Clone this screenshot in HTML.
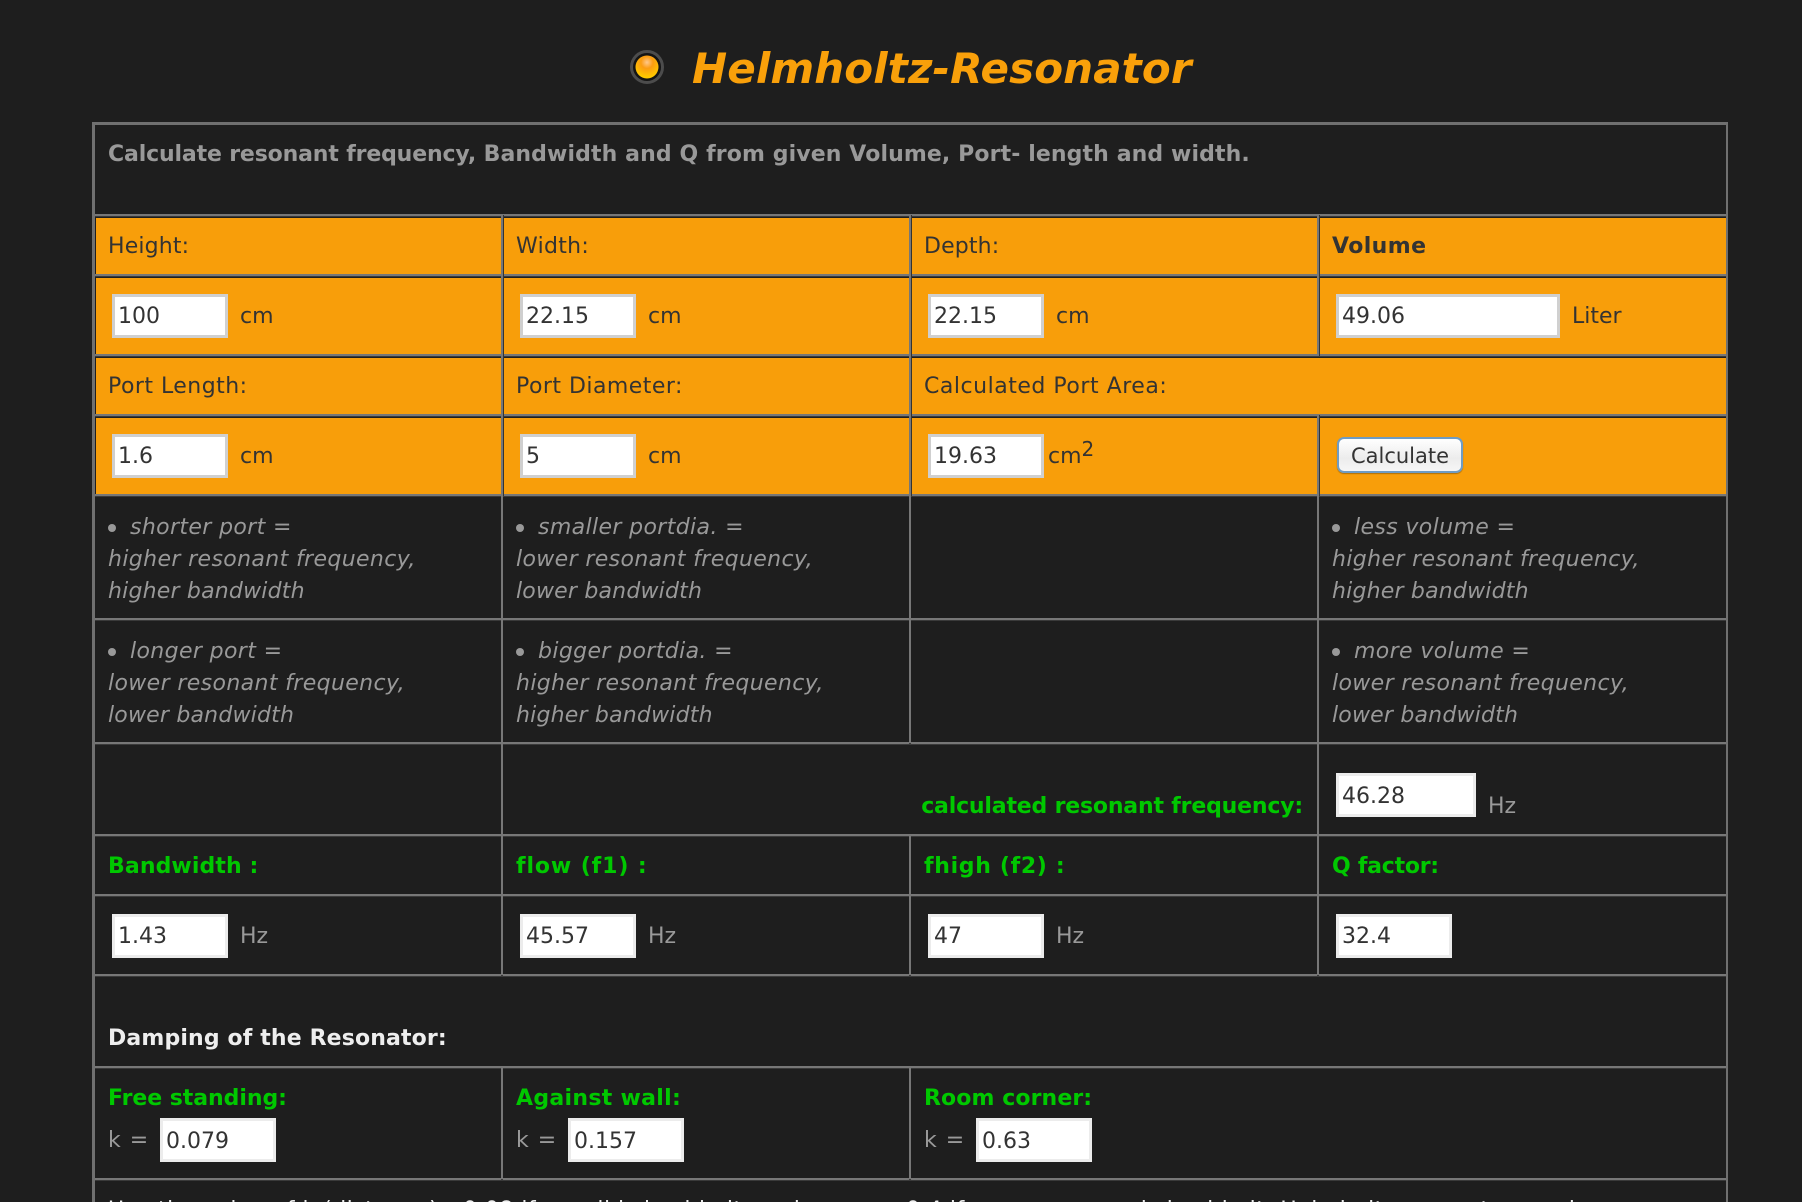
<!DOCTYPE html>
<html><head><meta charset="utf-8"><title>Helmholtz-Resonator</title>
<style>
html,body{margin:0;padding:0;background:#1e1e1e;width:1802px;height:1202px;overflow:hidden}
body{position:relative;font-family:"DejaVu Sans","Liberation Sans",sans-serif;font-size:22px;color:#999}
.l,.o,.t,.i,.v{position:absolute}
.l{background:#777;box-shadow:0 1px 0 #3a3a3a}
.f{background:#707070;box-shadow:none}
.y{box-shadow:1px 0 0 #333}
.o{background:#f89e0a}
.t{white-space:nowrap;line-height:28px;height:28px;margin-top:1px;letter-spacing:.47px}
.n{letter-spacing:0}
.d{color:#333}.b{font-weight:bold;letter-spacing:.11px}.g{color:#00c800;font-weight:bold;letter-spacing:0}.w{color:#eee;font-weight:bold;letter-spacing:.14px}
.e{font-style:italic;letter-spacing:.37px;margin-top:2px}
.i{background:#fff;box-sizing:border-box;border:3px solid #ececec;color:#333;height:44px;line-height:40px;padding-left:3px}
.j{line-height:42px}
.s{border-color:#cfcfcf #d0d0d0 #d0d0d0 #cfcfcf}
.u{position:absolute;width:8px;height:8px;border-radius:50%;background:#999}
.btn{position:absolute;left:1337px;top:437px;width:126px;height:36px;box-sizing:border-box;border:2px solid #6f9cc4;border-radius:7px;background:linear-gradient(#fff,#ececec 60%,#f6f6f6);color:#333;text-align:center;line-height:34px;font-size:21px;box-shadow:0 1px 1px rgba(0,0,0,.3)}
</style></head><body>
<svg style="position:absolute;left:628px;top:48px" width="38" height="38" viewBox="0 0 38 38">
<defs><radialGradient id="a" cx=".5" cy=".3" r=".75"><stop offset="0" stop-color="#ffc88a"/><stop offset=".35" stop-color="#fb9c12"/><stop offset=".8" stop-color="#ffc400"/><stop offset="1" stop-color="#ffd000"/></radialGradient></defs>
<circle cx="19" cy="19" r="15.5" fill="#141414" stroke="#4c4c4c" stroke-width="3"/><circle cx="19" cy="19" r="11.5" fill="url(#a)"/></svg>
<div class="t" style="left:692px;top:40px;height:56px;line-height:56px;font-size:42px;font-weight:bold;font-style:italic;color:#f9a00a;letter-spacing:.12px">Helmholtz-Resonator</div>

<div class="o" style="left:96px;top:218px;width:1630px;height:56px"></div>
<div class="o" style="left:96px;top:278px;width:1630px;height:76px"></div>
<div class="o" style="left:96px;top:358px;width:1630px;height:56px"></div>
<div class="o" style="left:96px;top:418px;width:1630px;height:76px"></div>

<!-- frame -->
<div class="l f" style="left:92px;top:122px;width:1636px;height:3px"></div>
<div class="l f" style="left:92px;top:122px;width:3px;height:1080px"></div>
<div class="l f" style="left:1726px;top:122px;width:2px;height:1080px"></div>
<!-- rows -->
<div class="l" style="left:95px;top:214px;width:1631px;height:2px"></div>
<div class="l" style="left:95px;top:274px;width:1631px;height:2px"></div>
<div class="l" style="left:95px;top:354px;width:1631px;height:2px"></div>
<div class="l" style="left:95px;top:414px;width:1631px;height:2px"></div>
<div class="l" style="left:95px;top:494px;width:1631px;height:2px"></div>
<div class="l" style="left:95px;top:618px;width:1631px;height:2px"></div>
<div class="l" style="left:95px;top:742px;width:1631px;height:2px"></div>
<div class="l" style="left:95px;top:834px;width:1631px;height:2px"></div>
<div class="l" style="left:95px;top:894px;width:1631px;height:2px"></div>
<div class="l" style="left:95px;top:974px;width:1631px;height:2px"></div>
<div class="l" style="left:95px;top:1066px;width:1631px;height:2px"></div>
<div class="l" style="left:95px;top:1178px;width:1631px;height:2px"></div>
<!-- verticals -->
<div class="l y" style="left:501px;top:215px;width:2px;height:61px"></div>
<div class="l y" style="left:909px;top:215px;width:2px;height:61px"></div>
<div class="l y" style="left:1317px;top:215px;width:2px;height:61px"></div>
<div class="l y" style="left:501px;top:275px;width:2px;height:81px"></div>
<div class="l y" style="left:909px;top:275px;width:2px;height:81px"></div>
<div class="l y" style="left:1317px;top:275px;width:2px;height:81px"></div>
<div class="l y" style="left:501px;top:355px;width:2px;height:61px"></div>
<div class="l y" style="left:909px;top:355px;width:2px;height:61px"></div>
<div class="l y" style="left:501px;top:415px;width:2px;height:81px"></div>
<div class="l y" style="left:909px;top:415px;width:2px;height:81px"></div>
<div class="l y" style="left:1317px;top:415px;width:2px;height:81px"></div>
<div class="l" style="left:501px;top:495px;width:2px;height:248px"></div>
<div class="l" style="left:909px;top:495px;width:2px;height:248px"></div>
<div class="l" style="left:1317px;top:495px;width:2px;height:248px"></div>
<div class="l" style="left:501px;top:743px;width:2px;height:92px"></div>
<div class="l" style="left:1317px;top:743px;width:2px;height:92px"></div>
<div class="l" style="left:501px;top:835px;width:2px;height:140px"></div>
<div class="l" style="left:909px;top:835px;width:2px;height:140px"></div>
<div class="l" style="left:1317px;top:835px;width:2px;height:140px"></div>
<div class="l" style="left:501px;top:1067px;width:2px;height:112px"></div>
<div class="l" style="left:909px;top:1067px;width:2px;height:112px"></div>

<div class="t b" style="left:108px;top:140px"><span style="letter-spacing:-.15px">Calculate resonant frequency, </span>Bandwidth and Q from given Volume, Port- length and width.</div>

<div class="t d" style="left:108px;top:232px;letter-spacing:.15px">Height:</div>
<div class="t d" style="left:516px;top:232px;letter-spacing:.3px">Width:</div>
<div class="t d" style="left:924px;top:232px;letter-spacing:.15px">Depth:</div>
<div class="t d b" style="left:1332px;top:232px;letter-spacing:.4px">Volume</div>

<div class="i s" style="left:112px;top:294px;width:116px">100</div><div class="t d n" style="left:240px;top:302px">cm</div>
<div class="i s" style="left:520px;top:294px;width:116px">22.15</div><div class="t d n" style="left:648px;top:302px">cm</div>
<div class="i s" style="left:928px;top:294px;width:116px">22.15</div><div class="t d n" style="left:1056px;top:302px">cm</div>
<div class="i s" style="left:1336px;top:294px;width:224px">49.06</div><div class="t d n" style="left:1572px;top:302px">Liter</div>

<div class="t d" style="left:108px;top:372px">Port Length:</div>
<div class="t d" style="left:516px;top:372px">Port Diameter:</div>
<div class="t d" style="left:924px;top:372px;letter-spacing:.52px">Calculated Port Area:</div>

<div class="i s" style="left:112px;top:434px;width:116px">1.6</div><div class="t d n" style="left:240px;top:442px">cm</div>
<div class="i s" style="left:520px;top:434px;width:116px">5</div><div class="t d n" style="left:648px;top:442px">cm</div>
<div class="i s" style="left:928px;top:434px;width:116px">19.63</div><div class="t d n" style="left:1048px;top:442px">cm<sup style="font-size:20px;line-height:0;position:relative;top:1px">2</sup></div>
<div class="btn">Calculate</div>

<div class="u" style="left:108px;top:524px"></div><div class="t e" style="left:130px;top:512px">shorter port =</div>
<div class="t e" style="left:108px;top:544px">higher resonant frequency,</div><div class="t e" style="left:108px;top:576px;letter-spacing:.2px">higher bandwidth</div>
<div class="u" style="left:516px;top:524px"></div><div class="t e" style="left:538px;top:512px">smaller portdia. =</div>
<div class="t e" style="left:516px;top:544px">lower resonant frequency,</div><div class="t e" style="left:516px;top:576px;letter-spacing:.2px">lower bandwidth</div>
<div class="u" style="left:1332px;top:524px"></div><div class="t e" style="left:1354px;top:512px">less volume =</div>
<div class="t e" style="left:1332px;top:544px">higher resonant frequency,</div><div class="t e" style="left:1332px;top:576px;letter-spacing:.2px">higher bandwidth</div>

<div class="u" style="left:108px;top:648px"></div><div class="t e" style="left:130px;top:636px">longer port =</div>
<div class="t e" style="left:108px;top:668px">lower resonant frequency,</div><div class="t e" style="left:108px;top:700px;letter-spacing:.2px">lower bandwidth</div>
<div class="u" style="left:516px;top:648px"></div><div class="t e" style="left:538px;top:636px">bigger portdia. =</div>
<div class="t e" style="left:516px;top:668px">higher resonant frequency,</div><div class="t e" style="left:516px;top:700px;letter-spacing:.2px">higher bandwidth</div>
<div class="u" style="left:1332px;top:648px"></div><div class="t e" style="left:1354px;top:636px">more volume =</div>
<div class="t e" style="left:1332px;top:668px">lower resonant frequency,</div><div class="t e" style="left:1332px;top:700px;letter-spacing:.2px">lower bandwidth</div>

<div class="t g" style="right:499px;top:792px;letter-spacing:-.18px">calculated resonant frequency:</div>
<div class="i j" style="left:1336px;top:773px;width:140px">46.28</div><div class="t n" style="left:1488px;top:792px">Hz</div>

<div class="t g" style="left:108px;top:852px;letter-spacing:.1px">Bandwidth :</div>
<div class="t g" style="left:516px;top:852px;letter-spacing:.9px">flow (f1) :</div>
<div class="t g" style="left:924px;top:852px;letter-spacing:.67px">fhigh (f2) :</div>
<div class="t g" style="left:1332px;top:852px;letter-spacing:-.25px">Q factor:</div>

<div class="i" style="left:112px;top:914px;width:116px">1.43</div><div class="t n" style="left:240px;top:922px">Hz</div>
<div class="i" style="left:520px;top:914px;width:116px">45.57</div><div class="t n" style="left:648px;top:922px">Hz</div>
<div class="i" style="left:928px;top:914px;width:116px">47</div><div class="t n" style="left:1056px;top:922px">Hz</div>
<div class="i" style="left:1336px;top:914px;width:116px">32.4</div>

<div class="t w" style="left:108px;top:1024px">Damping of the Resonator:</div>

<div class="t g" style="left:108px;top:1084px;letter-spacing:-.05px">Free standing:</div>
<div class="t g" style="left:516px;top:1084px;letter-spacing:.3px">Against wall:</div>
<div class="t g" style="left:924px;top:1084px;letter-spacing:.1px">Room corner:</div>
<div class="t" style="left:108px;top:1126px;letter-spacing:1px">k =</div><div class="i j" style="left:160px;top:1118px;width:116px">0.079</div>
<div class="t" style="left:516px;top:1126px;letter-spacing:1px">k =</div><div class="i j" style="left:568px;top:1118px;width:116px">0.157</div>
<div class="t" style="left:924px;top:1126px;letter-spacing:1px">k =</div><div class="i j" style="left:976px;top:1118px;width:116px">0.63</div>

<div class="t" style="left:108px;top:1196px;color:#eee">Use the value of k (distance) =</div>
<div class="t" style="left:463px;top:1196px;color:#eee">0.08 if a wall is beside it, and</div>
<div class="t" style="left:906px;top:1196px;color:#eee">0.4 if a room corner is beside it. Helmholtz resonator can be</div>
</body></html>
